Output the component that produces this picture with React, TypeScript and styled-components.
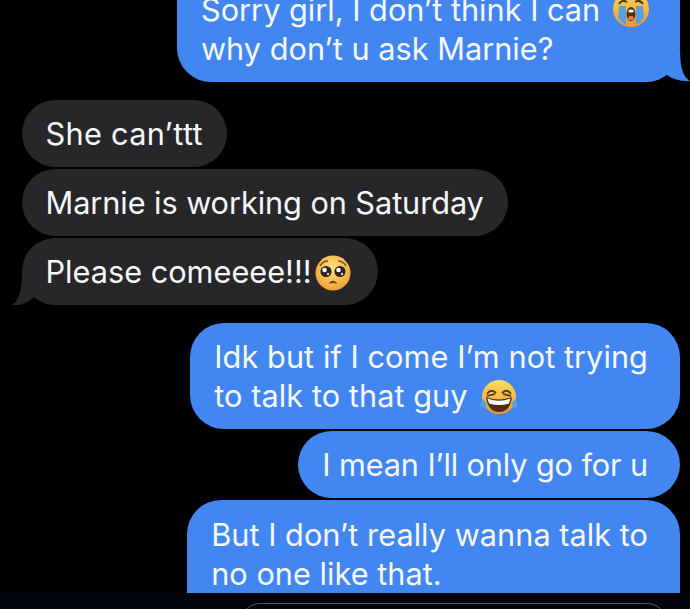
import React from "react";
import styled, { createGlobalStyle } from "styled-components";

const GlobalStyle = createGlobalStyle`
  html, body {
    margin: 0;
    padding: 0;
    background: #000;
  }
`;

const Thread = styled.div`
  width: 690px;
  height: 609px;
  overflow: hidden;
  background: #000;
  display: flex;
  flex-direction: column;
  font-family: Inter, "Noto Sans", sans-serif;
  font-size: 30.7px;
  line-height: 39px;
  color: #f6f8fc;
`;

const Bubble = styled.div<{ $mine?: boolean; $tracking?: number }>`
  position: relative;
  box-sizing: border-box;
  flex: none;
  align-self: ${(p) => (p.$mine ? "flex-end" : "flex-start")};
  margin: ${(p) => (p.$mine ? "2px 10px 0 0" : "2px 0 0 22px")};
  padding: ${(p) => (p.$mine ? "14px 32px 14px 24px" : "14px 24px 14px 23.5px")};
  border-radius: 34px;
  background: ${(p) => (p.$mine ? "#4286f2" : "#27272a")};
  letter-spacing: ${(p) => p.$tracking ?? 0}px;
  white-space: nowrap;
`;

const TopBubble = styled(Bubble)`
  margin-top: -24px;
  width: 503px;
  height: 106px;
  padding: 14px 24px 0;
  border-radius: 0 0 34px 34px;
`;

const FirstBubble = styled(Bubble)`
  margin-top: 18px;
`;

const ClippedBubble = styled(Bubble)`
  height: 93px;
  overflow: hidden;
  border-radius: 34px 34px 0 0;
  padding-top: 14.5px;
  padding-bottom: 0;
`;

const Tail = styled.svg<{ $mine?: boolean }>`
  position: absolute;
  bottom: 0;
  width: 25px;
  height: 34px;
  overflow: visible;
  ${(p) => (p.$mine ? "right: -10px;" : "left: -10px;")}
`;

const Footer = styled.div`
  flex: 1;
  padding: 10px 23px 0 240px;
  background: #01040a;
`;

const InputOutline = styled.div`
  height: 40px;
  border: 1.5px solid #58595d;
  border-radius: 20px;
`;

const EmojiIcon = styled.svg<{ $margin: string }>`
  display: inline-block;
  vertical-align: middle;
  margin: ${(p) => p.$margin};
`;

const CryingFace = () => (
  <EmojiIcon width="36" height="36" viewBox="0 0 36 36" $margin="-14px 0 -6px 4px">
    <defs>
      <linearGradient id="cry" x1="0" y1="0" x2="0" y2="1">
        <stop offset="0" stopColor="#fbd85c" />
        <stop offset="1" stopColor="#f1962c" />
      </linearGradient>
    </defs>
    <circle cx="18" cy="18" r="18" fill="url(#cry)" />
    <path d="M6 13 Q9 8 14 11 M30 13 Q27 8 22 11" stroke="#4d3a1c" strokeWidth="2" fill="none" />
    <path d="M6 15 H13 V34 Q8 32 5 26 Z M23 15 H30 L31 26 Q28 32 23 34 Z" fill="#5c9ee0" />
    <ellipse cx="18" cy="23" rx="4.5" ry="7" fill="#4d3012" />
    <ellipse cx="18" cy="20" rx="2.8" ry="1.5" fill="#fff" />
    <ellipse cx="18" cy="27" rx="2.8" ry="2" fill="#d98a5a" />
  </EmojiIcon>
);

const PleadingFace = () => (
  <EmojiIcon width="36" height="36" viewBox="0 0 36 36" $margin="-8px 3px -4px 3px">
    <defs>
      <radialGradient id="plead" cx="0.5" cy="0.35" r="0.7">
        <stop offset="0" stopColor="#fde27a" />
        <stop offset="1" stopColor="#f29b2e" />
      </radialGradient>
    </defs>
    <circle cx="18" cy="18" r="17.5" fill="url(#plead)" />
    <path d="M5 11 Q8 6 13 6 M31 11 Q28 6 23 6" stroke="#7a5620" strokeWidth="1.5" fill="none" />
    <circle cx="11" cy="16.5" r="5.5" fill="#2b2320" />
    <circle cx="25" cy="16.5" r="5.5" fill="#2b2320" />
    <circle cx="9.5" cy="15" r="2.3" fill="#fff" />
    <circle cx="23.5" cy="15" r="2.3" fill="#fff" />
    <circle cx="13" cy="19" r="1.2" fill="#cfd4dc" />
    <circle cx="27" cy="19" r="1.2" fill="#cfd4dc" />
    <path d="M14.5 28 Q18 24.5 21.5 28 Q18 27 14.5 28 Z" fill="#6b3a12" stroke="#6b3a12" />
  </EmojiIcon>
);

const LaughingFace = () => (
  <EmojiIcon width="38" height="36" viewBox="0 0 38 36" $margin="-8px 0 -4px 4px">
    <defs>
      <linearGradient id="laugh" x1="0" y1="0" x2="0" y2="1">
        <stop offset="0" stopColor="#fbdc62" />
        <stop offset="1" stopColor="#ee962c" />
      </linearGradient>
    </defs>
    <circle cx="19" cy="18" r="17" fill="url(#laugh)" />
    <path d="M7 15 Q11 9 16 14 M31 15 Q27 9 22 14 M7 17 L15 15 M31 17 L23 15" stroke="#4d3a1c" strokeWidth="1.8" fill="none" />
    <path d="M6 18 Q19 23 32 18 Q30 33 19 33 Q8 33 6 18 Z" fill="#4d3012" />
    <path d="M7.5 19.5 Q19 24 30.5 19.5 L29 24.5 Q19 27.5 9 24.5 Z" fill="#fff" />
    <path d="M3 20 Q-1 25 1 28 Q4 30 6 27 Q7 24 3 20 Z M35 20 Q39 25 37 28 Q34 30 32 27 Q31 24 35 20 Z" fill="#5c9ee0" />
  </EmojiIcon>
);

export default function App() {
  return (
    <>
      <GlobalStyle />
      <Thread>
        <TopBubble $mine>
          Sorry girl, I don’t think I can <CryingFace />
          <br />
          why don’t u ask Marnie?
          <Tail $mine viewBox="0 0 25 34">
            <path d="M15 2 Q15 28 25 33 Q12 34 2 27 L0 10 Z" fill="#4286f2" />
          </Tail>
        </TopBubble>
        <FirstBubble $tracking={0.3}>She can’ttt</FirstBubble>
        <Bubble $tracking={-0.07}>Marnie is working on Saturday</Bubble>
        <Bubble>
          Please comeeee!!!
          <PleadingFace />
          <Tail viewBox="0 0 25 34">
            <path d="M10 2 Q10 28 0 34 Q13 35 21 27 L25 10 Z" fill="#27272a" />
          </Tail>
        </Bubble>
        <FirstBubble $mine $tracking={0.06}>
          Idk but if I come I’m not trying
          <br />
          to talk to that guy <LaughingFace />
        </FirstBubble>
        <Bubble $mine $tracking={-0.12}>
          I mean I’ll only go for u
        </Bubble>
        <ClippedBubble $mine $tracking={0.03}>
          But I don’t really wanna talk to
          <br />
          no one like that.
        </ClippedBubble>
        <Footer>
          <InputOutline />
        </Footer>
      </Thread>
    </>
  );
}
